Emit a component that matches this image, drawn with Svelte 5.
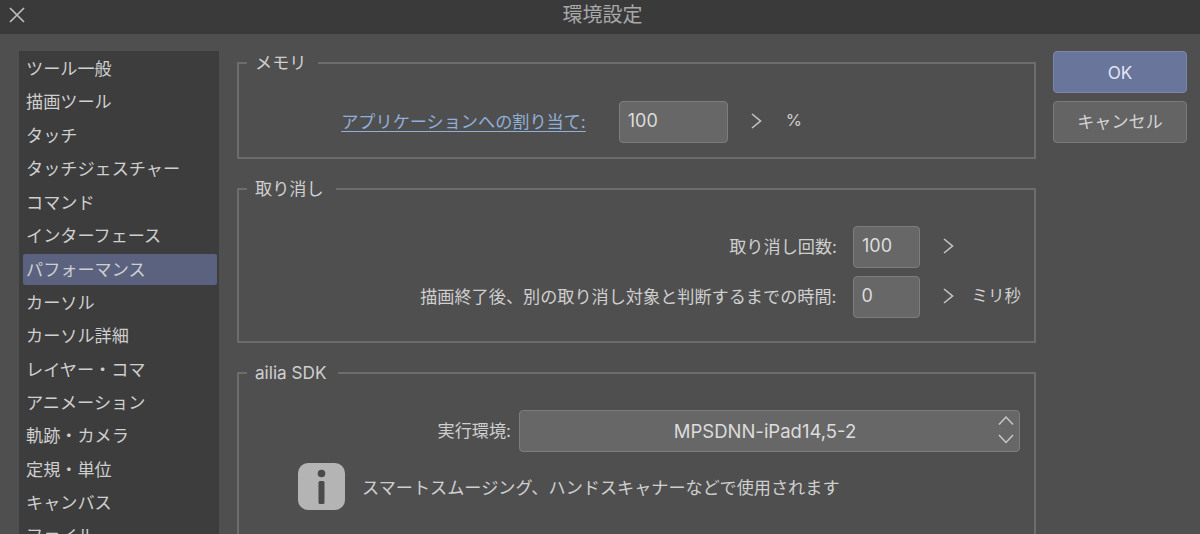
<script>
  const categories = [
    'ツール一般', '描画ツール', 'タッチ', 'タッチジェスチャー', 'コマンド',
    'インターフェース', 'パフォーマンス', 'カーソル', 'カーソル詳細', 'レイヤー・コマ',
    'アニメーション', '軌跡・カメラ', '定規・単位', 'キャンバス', 'ファイル'
  ]
  const active = 'パフォーマンス'
</script>

{#snippet chevron()}
  <svg class="chevron" width="12" height="18" viewBox="0 0 12 18" fill="none">
    <path d="M2 2l8.500 7-8.500 7" stroke="#c4c4c4" stroke-width="1.6" />
  </svg>
{/snippet}

<div class="dialog">
  <header class="titlebar">
    <button class="close" aria-label="閉じる">
      <svg width="18" height="18" viewBox="0 0 18 18" fill="none">
        <path d="M2 2l14 14M16 2L2 16" stroke="#bdbdbd" stroke-width="1.7" />
      </svg>
    </button>
    <span class="title">環境設定</span>
  </header>

  <div class="body">
    <nav class="sidebar">
      {#each categories as name}
        <div class="item" class:active={name === active}>{name}</div>
      {/each}
    </nav>

    <main class="panels">
      <fieldset class="memory">
        <legend>メモリ</legend>
        <div class="row">
          <span class="label link">アプリケーションへの割り当て:</span>
          <div class="input wide">100</div>
          {@render chevron()}
          <span class="unit">%</span>
        </div>
      </fieldset>

      <fieldset class="undo">
        <legend>取り消し</legend>
        <div class="row">
          <span class="label">取り消し回数:</span>
          <div class="input">100</div>
          {@render chevron()}
        </div>
        <div class="row">
          <span class="label">描画終了後、別の取り消し対象と判断するまでの時間:</span>
          <div class="input">0</div>
          {@render chevron()}
          <span class="unit">ミリ秒</span>
        </div>
      </fieldset>

      <fieldset class="sdk">
        <legend>ailia SDK</legend>
        <div class="row">
          <span class="label">実行環境:</span>
          <div class="select">
            <span>MPSDNN-iPad14,5-2</span>
            <svg class="updown" width="18" height="30" viewBox="0 0 18 30" fill="none">
              <path d="M2 9.500l7-7.500 7 7.500M2 20l7 7.500 7-7.500" stroke="#c8c8c8" stroke-width="1.500" />
            </svg>
          </div>
        </div>
        <div class="note">
          <svg width="47" height="47" viewBox="0 0 47 47">
            <rect width="47" height="47" rx="10" fill="#b4b4b4" />
            <circle cx="23.5" cy="10.500" r="3.800" fill="#4a4a4a" />
            <rect x="20.500" y="18" width="6" height="23" rx="1.500" fill="#4a4a4a" />
          </svg>
          <span>スマートスムージング、ハンドスキャナーなどで使用されます</span>
        </div>
      </fieldset>
    </main>

    <aside class="actions">
      <button class="btn primary"><span class="ok">OK</span></button>
      <button class="btn"><span class="cancel">キャンセル</span></button>
    </aside>
  </div>
</div>

<style>
  :global(body) {
    margin: 0;
    background: #4f4f4f;
  }

  .dialog {
    height: 534px;
    overflow: hidden;
    font-family: Inter, "Noto Sans CJK JP", sans-serif;
    font-size: 17.15px;
    color: #cfcfcf;
  }

  .titlebar {
    height: 34px;
    display: flex;
    align-items: center;
    justify-content: center;
    position: relative;
    background: #3a3a3a;
  }

  .close {
    position: absolute;
    left: 8px;
    top: 6px;
    padding: 0;
    display: flex;
    border: none;
    background: none;
  }

  .title {
    font-size: 20px;
    color: #a8a8a8;
    margin: 0 0 8px 5px;
  }

  .body {
    display: flex;
    align-items: flex-start;
    padding: 17px 13px 0 19px;
    background: #4f4f4f;
  }

  .sidebar {
    width: 200px;
    flex: none;
    background: #3d3d3d;
  }

  .item {
    height: 33.4px;
    line-height: 36px;
    padding-left: 7px;
    box-sizing: border-box;
    white-space: nowrap;
  }

  .item.active {
    height: 31px;
    line-height: 32px;
    margin: 2.4px 2px 0 4px;
    padding-left: 3px;
    border-radius: 2px;
    background: #5a6280;
  }

  .panels {
    width: 799px;
    margin-left: 18px;
    flex: none;
    display: flex;
    flex-direction: column;
    gap: 18px;
  }

  fieldset {
    margin: 0;
    padding: 25px 13px 0 0;
    border: 2px solid #6c6c6c;
    min-width: 0;
    box-sizing: border-box;
  }

  legend {
    margin-left: 8px;
    padding: 0 12px 0 8px;
    height: 24px;
    line-height: 24px;
    box-sizing: border-box;
  }

  .row {
    display: flex;
    align-items: center;
    justify-content: flex-end;
  }

  .label {
    margin-right: 16px;
    padding-bottom: 4px;
    white-space: nowrap;
  }

  .link {
    color: #8fb0d8;
    text-decoration: underline;
    text-underline-offset: 3px;
    margin-right: 33px;
  }

  .input {
    width: 67px;
    height: 42px;
    box-sizing: border-box;
    padding-left: 8px;
    line-height: 37px;
    font-size: 18px;
    color: #dcdcdc;
    background: #676767;
    border: 1.5px solid #7d7d7d;
    border-radius: 4px;
  }

  .input.wide {
    width: 109px;
  }

  .chevron {
    margin: 0 0 2px 22px;
    flex: none;
  }

  .unit {
    margin-left: 18px;
    padding-bottom: 4px;
    font-size: 16.5px;
    white-space: nowrap;
  }

  .memory {
    height: 108px;
    padding-top: 26px;
    padding-right: 232px;
  }

  .memory .unit {
    margin-left: 24px;
  }

  .undo {
    height: 166px;
  }

  .undo .row {
    margin-bottom: 8px;
  }

  .undo .row:first-of-type {
    padding-right: 67px;
  }

  .sdk {
    height: 190px;
    padding-right: 14px;
  }

  .select {
    width: 501px;
    height: 42px;
    box-sizing: border-box;
    padding-right: 9px;
    display: flex;
    align-items: center;
    justify-content: center;
    position: relative;
    font-size: 18.5px;
    color: #dcdcdc;
    background: #676767;
    border: 1.5px solid #7d7d7d;
    border-radius: 4px;
    flex: none;
  }

  .updown {
    position: absolute;
    right: 4px;
    top: 4px;
  }

  .sdk .label {
    margin-right: 8px;
  }

  .note {
    display: flex;
    align-items: center;
    gap: 17px;
    margin: 11px 0 0 59px;
  }

  .actions {
    width: 134px;
    margin-left: 17px;
    flex: none;
    display: flex;
    flex-direction: column;
    gap: 8px;
  }

  .btn {
    height: 42px;
    padding: 0;
    font: inherit;
    color: #d4d4d4;
    background: #646464;
    border: 1.5px solid #7a7a7a;
    border-radius: 4px;
  }

  .btn.primary {
    color: #e2e6f2;
    background: #69759b;
    border-color: #7c87aa;
  }

  .ok {
    display: block;
    padding-top: 1px;
  }

  .cancel {
    display: block;
    padding-bottom: 3px;
  }
</style>
